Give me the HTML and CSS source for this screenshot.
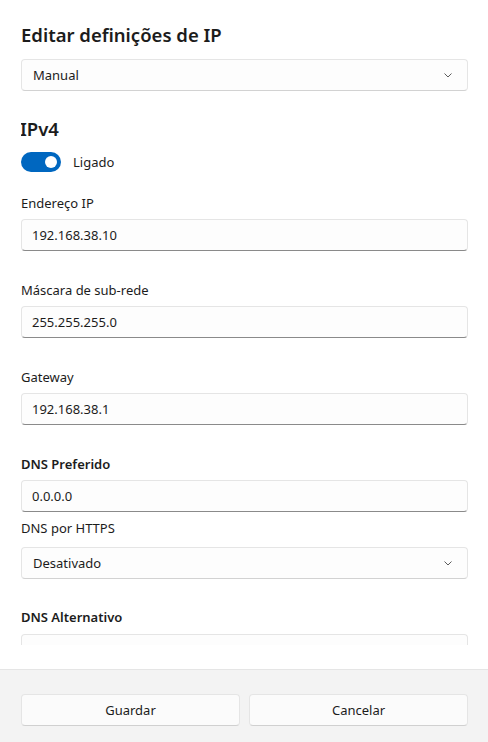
FILE: index.html
```html
<!DOCTYPE html>
<html lang="pt">
<head>
<meta charset="utf-8">
<title>Editar definições de IP</title>
<link rel="stylesheet" href="styles.css">
</head>
<body>
<div class="dialog">
  <div class="body">
    <div class="scroll">
      <h1 class="title">Editar definições de IP</h1>
      <div class="select select-mode">
        <span>Manual</span>
        <svg class="chev" width="8" height="5" viewBox="0 0 8 5"><path d="M0.5 0.5 L4 4 L7.5 0.5" fill="none" stroke="#5c5c5c" stroke-width="1"/></svg>
      </div>

      <h2 class="section">IPv4</h2>
      <div class="toggle-row">
        <span class="toggle"><span class="thumb"></span></span>
        <span class="toggle-label">Ligado</span>
      </div>

      <div class="field first">
        <div class="label">Endereço IP</div>
        <div class="input">192.168.38.10</div>
      </div>
      <div class="field">
        <div class="label">Máscara de sub-rede</div>
        <div class="input">255.255.255.0</div>
      </div>
      <div class="field">
        <div class="label">Gateway</div>
        <div class="input">192.168.38.1</div>
      </div>
      <div class="field">
        <div class="label strong">DNS Preferido</div>
        <div class="input">0.0.0.0</div>
      </div>
      <div class="field tight">
        <div class="label">DNS por HTTPS</div>
        <div class="select">
          <span>Desativado</span>
          <svg class="chev" width="8" height="5" viewBox="0 0 8 5"><path d="M0.5 0.5 L4 4 L7.5 0.5" fill="none" stroke="#5c5c5c" stroke-width="1"/></svg>
        </div>
      </div>
      <div class="field alt">
        <div class="label strong">DNS Alternativo</div>
        <div class="input"></div>
      </div>
    </div>
  </div>
  <div class="footer">
    <button class="btn">Guardar</button>
    <button class="btn">Cancelar</button>
  </div>
</div>
</body>
</html>
```

FILE: styles.css
```css
* { box-sizing: border-box; }
html, body { margin: 0; padding: 0; }
body {
  width: 488px;
  height: 742px;
  overflow: hidden;
  background: #ffffff;
  font-family: "Noto Sans", "Open Sans", sans-serif;
  color: #1c1c1c;
  font-size: 13px;
}
.dialog {
  display: flex;
  flex-direction: column;
  height: 742px;
}
.body {
  flex: none;
  height: 669px;
  padding: 21px 20px 24px 21px;
}
.scroll {
  height: 100%;
  overflow: hidden;
}
.title {
  margin: 0 0 10px;
  font-size: 18.5px;
  line-height: 28px;
  font-weight: 600;
}
.section {
  margin: 24px 0 9px -1px;
  font-size: 18.5px;
  line-height: 28px;
  font-weight: 600;
}
.select, .input {
  height: 32px;
  border: 1px solid #e5e5e5;
  border-radius: 4px;
  background: #fdfdfd;
  padding: 0 11px;
  display: flex;
  align-items: center;
  line-height: 20px;
}
.select {
  justify-content: space-between;
  border-bottom-color: #d2d2d2;
  padding-right: 15px;
}
.input {
  border-bottom-color: #8a8a8a;
  padding-left: 10px;
}
.chev { display: block; }
.toggle-row {
  display: flex;
  align-items: center;
  gap: 12px;
  height: 20px;
}
.toggle {
  width: 40px;
  height: 20px;
  border-radius: 10px;
  background: #0067c0;
  display: flex;
  align-items: center;
  justify-content: flex-end;
  padding-right: 4px;
}
.thumb {
  width: 12px;
  height: 12px;
  border-radius: 50%;
  background: #ffffff;
}
.toggle-label { line-height: 20px; }
.field { margin-top: 29px; }
.field.first { margin-top: 21px; }
.field.tight { margin-top: 6px; }
.field.alt { margin-top: 28px; }
.label {
  line-height: 20px;
  margin-bottom: 6px;
}
.field.tight .label { margin-bottom: 9px; }
.field.alt .label { margin-bottom: 7px; }
.label.strong { font-weight: 600; }
.footer {
  flex: 1;
  background: #f3f3f3;
  border-top: 1px solid #e5e5e5;
  padding: 24px 20px 0 21px;
  display: grid;
  grid-template-columns: 1fr 1fr;
  column-gap: 9px;
  align-content: start;
}
.btn {
  height: 32px;
  border: 1px solid #e5e5e5;
  border-bottom-color: #d0d0d0;
  border-radius: 4px;
  background: #fbfbfb;
  font-family: inherit;
  font-size: 13px;
  color: #1c1c1c;
  padding: 0;
}
```
